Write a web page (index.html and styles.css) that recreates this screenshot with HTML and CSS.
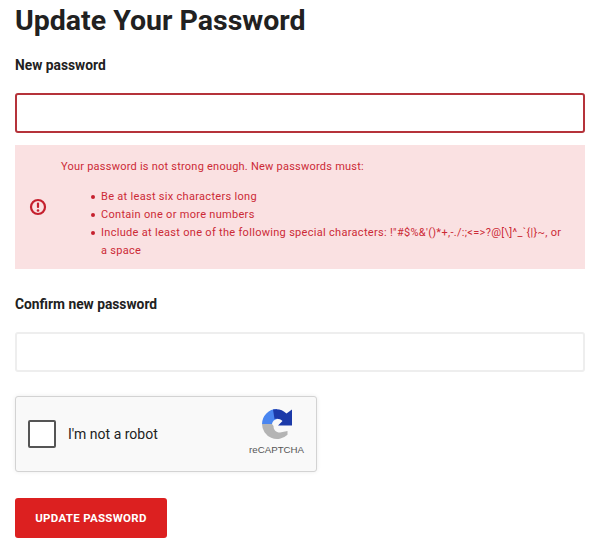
FILE: index.html
```html
<!DOCTYPE html>
<html lang="en">
<head>
    <meta charset="UTF-8">
    <title>Update Your Password</title>
    <link rel="stylesheet" href="styles.css">
</head>
<body>
    <form class="password-form">
        <h1 class="title">Update Your Password</h1>

        <label class="field-label" for="newPassword">New password</label>
        <input class="field field-error" id="newPassword" type="password">

        <div class="alert">
            <svg class="alert-icon" width="18" height="18" viewBox="0 0 18 18">
                <circle cx="9" cy="9" r="7" fill="none" stroke="#c5202e" stroke-width="2.2"/>
                <rect x="7.9" y="4.4" width="2.2" height="5.6" rx="1" fill="#c5202e"/>
                <circle cx="9" cy="12.5" r="1.3" fill="#c5202e"/>
            </svg>
            <div class="alert-body">
                <p class="alert-intro">Your password is not strong enough. New passwords must:</p>
                <ul class="alert-list">
                    <li>Be at least six characters long</li>
                    <li>Contain one or more numbers</li>
                    <li>Include at least one of the following special characters: !"#$%&amp;'()*+,-./:;&lt;=&gt;?@[\]^_`{|}~, or a space</li>
                </ul>
            </div>
        </div>

        <label class="field-label confirm-label" for="confirmPassword">Confirm new password</label>
        <input class="field" id="confirmPassword" type="password">

        <div class="captcha">
            <span class="captcha-box"></span>
            <span class="captcha-text">I'm not a robot</span>
            <div class="captcha-brand">
                <svg class="captcha-logo" width="31" height="31" viewBox="0 0 31 31">
                    <!-- blue, top left -->
                    <path d="M15 0 A15 15 0 0 0 0 15 H10 C10.5 12.5 12 10.5 15 10 Z" fill="#4a86f0"/>
                    <!-- dark blue with arrow, top right -->
                    <path d="M11 0.6 A15 15 0 0 1 24.5 4.5 L30 0.6 V16.5 H16 L20.5 12 C18.5 10 15.5 9.2 12.5 10 Z" fill="#1c3aa9"/>
                    <!-- grey, bottom left -->
                    <path d="M0 15 H10 L11.5 17 C11.5 21 14 23.5 18 23.5 L25.5 22 V25.7 A15 15 0 0 1 0 15 Z" fill="#b4b4b4"/>
                </svg>
                <span class="captcha-label">reCAPTCHA</span>
            </div>
        </div>

        <button class="submit" type="button">UPDATE PASSWORD</button>
    </form>
</body>
</html>
```

FILE: styles.css
```css
body {
    margin: 0;
    padding: 0 15px;
    background-color: #fff;
    color: #212121;
    font-family: Roboto, "Liberation Sans", sans-serif;
    overflow: hidden;
}

.password-form {
    display: flex;
    flex-direction: column;
    align-items: flex-start;
    width: 570px;
}

.title {
    margin: 3px 0 0;
    font-size: 28.5px;
    line-height: 36px;
    font-weight: 700;
}

.field-label {
    margin-top: 16px;
    font-size: 13.8px;
    line-height: 20px;
    font-weight: 700;
}

.field {
    box-sizing: border-box;
    width: 100%;
    height: 40px;
    margin-top: 18px;
    padding: 0 10px;
    background-color: #fff;
    border: 2px solid #eeeeee;
    border-radius: 3px;
    outline: none;
}

.field-error {
    border-color: #b5333a;
}

.alert {
    display: flex;
    align-items: center;
    width: 100%;
    height: 124px;
    margin-top: 12px;
    background-color: #fae1e2;
    color: #cc2a36;
    font-size: 11px;
    line-height: 18px;
    letter-spacing: 0.3px;
}

.alert-icon {
    flex: none;
    margin: 0 14px;
}

.alert-body {
    flex: 1;
    padding: 4px 18px 0 0;
}

.alert-intro {
    margin: 0 0 12px;
    letter-spacing: 0.23px;
}

.alert-list {
    margin: 0;
    padding-left: 30px;
    list-style: none;
}

.alert-list li {
    display: flex;
    gap: 6px;
}

.alert-list li::before {
    content: "";
    flex: none;
    width: 4px;
    height: 4px;
    margin-top: 7px;
    border-radius: 50%;
    background-color: #c5202e;
}

.confirm-label {
    margin-top: 25px;
}

.captcha {
    box-sizing: border-box;
    display: flex;
    align-items: center;
    width: 302px;
    height: 76px;
    margin-top: 24px;
    padding-left: 12px;
    background-color: #f9f9f9;
    border: 1px solid #d3d3d3;
    border-radius: 3px;
    box-shadow: 0 0 4px rgba(0, 0, 0, 0.08);
}

.captcha-box {
    box-sizing: border-box;
    width: 28px;
    height: 28px;
    background-color: #fff;
    border: 2px solid #555;
    border-radius: 2px;
}

.captcha-text {
    margin-left: 12px;
    font-size: 14px;
    color: #222;
}

.captcha-brand {
    display: flex;
    flex-direction: column;
    align-items: center;
    margin-left: auto;
    margin-right: 12px;
    margin-bottom: 3px;
}

.captcha-logo {
    margin-left: 2px;
}

.captcha-label {
    margin-top: 4px;
    font-family: "Liberation Sans", sans-serif;
    font-size: 9.7px;
    line-height: 12px;
    color: #555;
}

.submit {
    width: 152px;
    height: 40px;
    margin-top: 26px;
    padding: 0;
    background-color: #dc2020;
    color: #fff;
    border: none;
    border-radius: 3px;
    font-family: Roboto, sans-serif;
    font-size: 11.5px;
    font-weight: 700;
    letter-spacing: 0.3px;
}
```
